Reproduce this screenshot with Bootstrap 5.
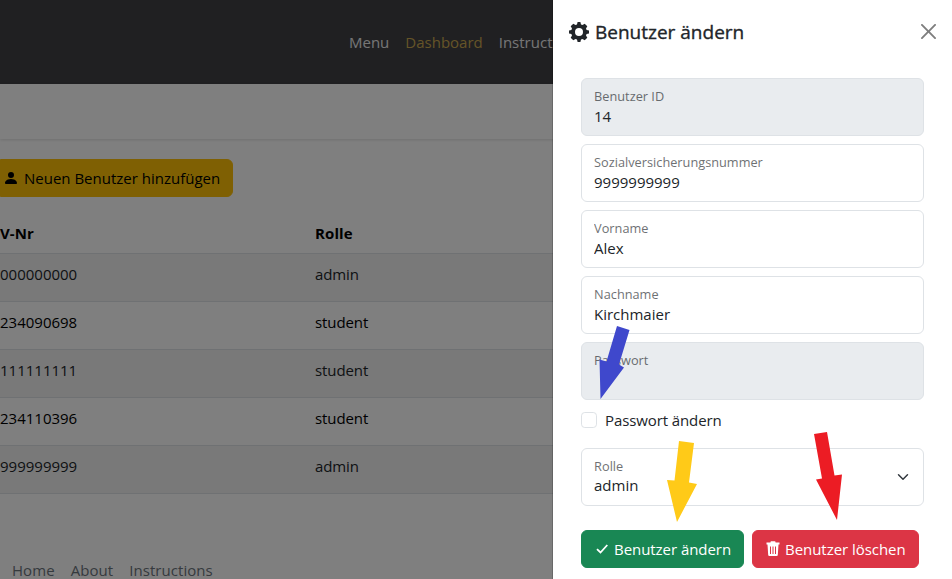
<!DOCTYPE html>
<html lang="de">
<head>
<meta charset="utf-8">
<meta name="viewport" content="width=device-width, initial-scale=1">
<title>Benutzer ändern</title>
<link href="https://cdn.jsdelivr.net/npm/bootstrap@5.3.0/dist/css/bootstrap.min.css" rel="stylesheet">
<style>
  body { font-family: "Open Sans", "Noto Sans", sans-serif; font-size: 15px; line-height: 24px; height: 579px; overflow: hidden; }
  .topbar { height: 84px; background: #404044; padding: 0 0 1px 341px; }
  .topbar .nav-link { padding: 8px; color: #fff; white-space: nowrap; opacity: .9; }
  .topbar .nav-link.active { color: #caa850; opacity: 1; }
  .subbar { height: 55px; margin-bottom: 20px; box-shadow: 0 1px 3px rgba(0,0,0,.13); }
  .btn { --bs-btn-font-size: 15px; --bs-btn-line-height: 24px; }
  .add-user { border-radius: 0 6px 6px 0; padding: 6px 12px 6px 2px; }
  .add-user .glyph { margin-right: 5px; }
  .users { margin-top: 16px; table-layout: fixed; --bs-table-color: #000; color: #000; }
  .users th, .users td { line-height: 24px; }
  .users th { letter-spacing: .1px; }
  .users td { height: 48px; }
  .users td:last-child { letter-spacing: -.1px; }
  .users th:first-child, .users td:first-child { width: 307px; padding-left: 0; }
  .foot-links { margin-top: 61px; padding-left: 4px; }
  .foot-links .nav-link { padding: 4px 8px 0; color: #6c757d; line-height: 22px; letter-spacing: .06px; }
  .offcanvas.edit-panel { --bs-offcanvas-width: 400px; border-left: 1px solid rgba(0,0,0,.18); }
  .edit-panel .offcanvas-title { font-size: 19px; line-height: 30px; -webkit-text-stroke: .35px currentColor; }
  .edit-panel .offcanvas-title .glyph { margin-right: 6px; }
  .edit-panel .offcanvas-header { padding-top: 17px; padding-bottom: 15px; }
  .edit-panel .btn-close { margin: -2px -7.500px 0 0; padding: 8px; }
  .form-floating > .form-control { font-size: 15px; line-height: 20px; padding-top: 27px !important; padding-bottom: 9px !important; }
  .form-floating > .form-select { font-size: 15px; line-height: 20px; }
  .form-floating > label, .form-floating > .form-control:disabled ~ label { font-size: 15px; color: #212529; }
  .form-floating > .form-control:disabled ~ label { opacity: .65; }
  .form-floating > .form-control:disabled { background: #e9ecef; color: #212529; opacity: 1; }
  .form-floating > label::after { display: none; }
  .form-check-input { width: 16px; height: 16px; }
  .form-check-label { padding-left: 1.500px; letter-spacing: -.1px; }
  .act-save span, .act-del span { letter-spacing: -.05px; }
  .glyph { fill: currentColor; display: inline-block; flex: none; }
  .pointers { position: absolute; inset: 0; z-index: 1100; pointer-events: none; }
</style>
</head>
<body>
<header class="topbar d-flex align-items-center">
  <nav class="nav flex-nowrap">
    <a class="nav-link" href="#">Menu</a>
    <a class="nav-link active" href="#">Dashboard</a>
    <a class="nav-link" href="#">Instructions</a>
  </nav>
</header>
<div class="subbar"></div>
<main>
  <button class="btn btn-warning add-user d-inline-flex align-items-center" type="button">
    <svg class="glyph" width="16" height="16" viewBox="0 0 16 16"><path d="M3 14s-1 0-1-1 1-4 6-4 6 3 6 4-1 1-1 1H3Zm5-6a3 3 0 1 0 0-6 3 3 0 0 0 0 6Z"/></svg>
    <span>Neuen Benutzer hinzufügen</span>
  </button>
  <table class="table table-striped users mb-0">
    <thead><tr><th>V-Nr</th><th>Rolle</th></tr></thead>
    <tbody>
      <tr><td>000000000</td><td>admin</td></tr>
      <tr><td>234090698</td><td>student</td></tr>
      <tr><td>111111111</td><td>student</td></tr>
      <tr><td>234110396</td><td>student</td></tr>
      <tr><td>999999999</td><td>admin</td></tr>
    </tbody>
  </table>
</main>
<footer class="nav foot-links">
  <a class="nav-link" href="#">Home</a>
  <a class="nav-link" href="#">About</a>
  <a class="nav-link" href="#">Instructions</a>
</footer>

<div class="offcanvas-backdrop show"></div>
<aside class="offcanvas offcanvas-end show edit-panel" tabindex="-1" data-bs-backdrop="false" data-bs-scroll="true" aria-labelledby="panelTitle">
  <div class="offcanvas-header">
    <h5 class="offcanvas-title d-flex align-items-center" id="panelTitle">
      <svg class="glyph" width="20" height="20" viewBox="0 0 20 20"><path fill-rule="evenodd" d="M8.600 0h2.800l.6 2.400 1.500.6 2.200-1.300 2.600 2.600L17 6.500l.6 1.500L20 8.600v2.800l-2.400.6-.6 1.500 1.300 2.200-2.600 2.600-2.200-1.300-1.500.6-.6 2.400H8.600L8 17.600 6.500 17l-2.200 1.300-2.600-2.600L3 13.500 2.400 12 0 11.400V8.600L2.400 8 3 6.500 1.700 4.300l2.600-2.600L6.500 3 8 2.400ZM10 6a4 4 0 1 0 0 8 4 4 0 0 0 0-8Z"/></svg>
      <span>Benutzer ändern</span>
    </h5>
    <button type="button" class="btn-close" aria-label="Schließen"></button>
  </div>
  <div class="offcanvas-body">
    <form class="container-fluid">
      <div class="form-floating mb-2"><input class="form-control" id="uid" value="14" placeholder=" " disabled><label for="uid">Benutzer ID</label></div>
      <div class="form-floating mb-2"><input class="form-control" id="svnr" value="9999999999" placeholder=" "><label for="svnr">Sozialversicherungsnummer</label></div>
      <div class="form-floating mb-2"><input class="form-control" id="vn" value="Alex" placeholder=" "><label for="vn">Vorname</label></div>
      <div class="form-floating mb-2"><input class="form-control" id="nn" value="Kirchmaier" placeholder=" "><label for="nn">Nachname</label></div>
      <div class="form-floating mb-2"><input class="form-control" id="pw" value=" " placeholder=" " disabled><label for="pw">Passwort</label></div>
      <div class="form-check mb-3"><input class="form-check-input" type="checkbox" id="chg"><label class="form-check-label" for="chg">Passwort ändern</label></div>
      <div class="form-floating mb-4"><select class="form-select" id="role"><option>admin</option><option>student</option></select><label for="role">Rolle</label></div>
      <div class="d-flex gap-2">
        <button type="button" class="btn btn-success d-flex align-items-center text-nowrap act-save"><svg class="glyph me-1" width="16" height="16" viewBox="0 0 16 16"><path d="M3 8.200 6.500 11.500 13.300 4" fill="none" stroke="currentColor" stroke-width="1.800"/></svg><span>Benutzer ändern</span></button>
        <button type="button" class="btn btn-danger d-flex align-items-center text-nowrap act-del"><svg class="glyph me-1" width="16" height="16" viewBox="0 0 16 16"><path fill-rule="evenodd" d="M1.500 1.500H5.500V1q0-.7.700-.7h3.600q.7 0 .7.700v.5h4v2h-1l-.7 10.500q-.1 1-1.100 1H4.300q-1 0-1.100-1L2.500 3.500h-1ZM5 5.500v7.500h1V5.500Zm2.500 0v7.500h1V5.500Zm2.500 0v7.500h1V5.500Z"/></svg><span>Benutzer löschen</span></button>
      </div>
    </form>
  </div>
</aside>
<svg class="pointers" width="952" height="579" viewBox="0 0 952 579" aria-hidden="true">
  <path fill="#3f48cc" d="M617 326 629.500 330 619 364.500 624 367.500 600.500 399 599.500 359.500 606.500 361.500Z"/>
  <path fill="#ffca18" d="M679 441 694 443 689 482.500 697 484 677 522 667 480 674.500 480.500Z"/>
  <path fill="#ec1c24" d="M814 434 827 432 834.500 475.500 842 474.500 837 520 816 479.500 822 478.500Z"/>
</svg>
<script src="https://cdn.jsdelivr.net/npm/bootstrap@5.3.0/dist/js/bootstrap.bundle.min.js"></script>
</body>
</html>
